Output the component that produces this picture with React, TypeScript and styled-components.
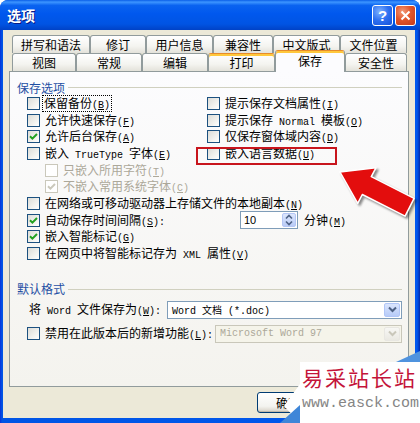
import React from 'react';
import styled, { createGlobalStyle } from 'styled-components';

const CJK = `"Noto Sans CJK SC", "Noto Sans", sans-serif`;
const MONO = `"Liberation Mono", "Noto Sans CJK SC", monospace`;

const GlobalStyle = createGlobalStyle`
  html, body {
    margin: 0;
    padding: 0;
    width: 420px;
    height: 423px;
    overflow: hidden;
    background: #ffffff;
  }
  body {
    font-family: ${CJK};
    font-size: 12px;
  }
`;

const Window = styled.div`
  position: relative;
  width: 420px;
  height: 423px;
  display: flex;
  flex-direction: column;
  background: linear-gradient(to right, #0831d9, #0055e5 2px, #0058ee calc(100% - 3px), #0029a8);
  border-radius: 8px 8px 0 0;
  overflow: hidden;
`;

const TitleBar = styled.div`
  height: 30px;
  flex: none;
  display: flex;
  align-items: center;
  gap: 2px;
  padding: 0 4px 0 7px;
  background: linear-gradient(
    to bottom,
    #0a5fe8 0%,
    #3d95ff 7%,
    #0a63f0 18%,
    #0058ee 45%,
    #0054e3 80%,
    #0042c6 100%
  );
`;

const Title = styled.div`
  flex: 1;
  color: #ffffff;
  font: bold 14px ${CJK};
  line-height: 16px;
  text-shadow: 1px 1px 0 #0a1883;
`;

const CaptionButton = styled.div<{ $close?: boolean }>`
  width: 21px;
  height: 21px;
  box-sizing: border-box;
  border: 1px solid #ffffff;
  border-radius: 3px;
  display: flex;
  align-items: center;
  justify-content: center;
  color: #ffffff;
  font: bold 15px "Liberation Sans", sans-serif;
  background: ${({ $close }) =>
    $close
      ? 'radial-gradient(circle at 35% 30%, #f29b7a 0%, #e2562b 45%, #c4391a 100%)'
      : 'radial-gradient(circle at 35% 30%, #7fb2ff 0%, #2d6ff0 50%, #1550d8 100%)'};
`;

const Body = styled.div`
  flex: 1;
  margin: 0 5px 5px 3px;
  padding-top: 5px;
  background: #ece9d8;
  display: flex;
  flex-direction: column;
`;

const TabRow = styled.div`
  display: flex;
  height: 18px;
  margin-left: 9px;
`;

const Tab = styled.div<{ $w: number; $selected?: boolean; $hot?: boolean }>`
  width: ${({ $w }) => $w}px;
  height: ${({ $selected }) => ($selected ? 22 : 18)}px;
  margin-top: ${({ $selected }) => ($selected ? -3 : 0)}px;
  position: relative;
  z-index: ${({ $selected }) => ($selected ? 2 : 1)};
  box-sizing: border-box;
  border: 1px solid #919b9c;
  border-bottom: none;
  border-top-color: ${({ $selected, $hot }) => ($selected || $hot ? '#e68b2c' : '#919b9c')};
  border-radius: 3px 3px 0 0;
  box-shadow: ${({ $selected, $hot }) => ($selected || $hot ? 'inset 0 2px 0 #ffc83c' : 'none')};
  background: ${({ $selected }) =>
    $selected ? '#fcfcfe' : 'linear-gradient(#ffffff, #f4f4f0 60%, #e3e2da)'};
  display: flex;
  align-items: center;
  justify-content: center;
  padding-bottom: ${({ $selected }) => ($selected ? 2 : 0)}px;
  color: #000000;
  font: 12px ${CJK};
  line-height: 14px;
`;

const Panel = styled.div`
  margin-left: 6px;
  width: 400px;
  height: 316px;
  box-sizing: border-box;
  border: 1px solid #919b9c;
  background: linear-gradient(#fcfcfe, #f4f3ee);
  padding: 8px 6px 0 7px;
`;

const Group = styled.div<{ $gap?: number }>`
  margin-top: ${({ $gap }) => $gap ?? 0}px;
`;

const GroupHead = styled.div`
  display: flex;
  align-items: center;
  height: 15px;
`;

const GroupTitle = styled.span`
  color: #1f4fa3;
  font: 12px ${CJK};
  line-height: 14px;
`;

const GroupRule = styled.div`
  flex: 1;
  height: 1px;
  margin-left: 3px;
  background: #d0d0bf;
`;

const GroupBody = styled.div`
  margin-left: 10px;
`;

const Columns = styled.div`
  display: flex;
`;

const Column = styled.div<{ $w?: number }>`
  width: ${({ $w }) => ($w ? `${$w}px` : 'auto')};
  flex: ${({ $w }) => ($w ? 'none' : 1)};
`;

const Row = styled.div<{ $indent?: number }>`
  display: flex;
  align-items: center;
  height: 16.7px;
  margin-left: ${({ $indent }) => $indent ?? 0}px;
  white-space: nowrap;
`;

const FieldRow = styled.div<{ $gap?: number }>`
  display: flex;
  align-items: center;
  height: 18px;
  margin-top: ${({ $gap }) => $gap ?? 0}px;
  white-space: nowrap;
`;

const Field = styled.div<{ $w: number }>`
  width: ${({ $w }) => $w}px;
  flex: none;
  display: flex;
  align-items: center;
`;

const Box = styled.span<{ $disabled?: boolean }>`
  width: 13px;
  height: 13px;
  flex: none;
  box-sizing: border-box;
  border: 1px solid ${({ $disabled }) => ($disabled ? '#cac8bb' : '#1c5180')};
  background: ${({ $disabled }) =>
    $disabled ? '#ffffff' : 'linear-gradient(135deg, #dcdcd7 0%, #f5f5f2 70%, #ffffff 100%)'};
  display: flex;
  align-items: center;
  justify-content: center;
`;

const Label = styled.span<{ $disabled?: boolean; $focus?: boolean; $gap?: number }>`
  margin-left: ${({ $gap }) => $gap ?? 3}px;
  padding: 0 1px;
  color: ${({ $disabled }) => ($disabled ? '#aca899' : '#000000')};
  font: 12px ${CJK};
  line-height: 14px;
  border: 1px dotted ${({ $focus }) => ($focus ? '#000000' : 'transparent')};
`;

const Latin = styled.span`
  font: 10px ${MONO};
  white-space: pre;
`;

const Key = styled.span`
  font: 10px ${MONO};
  u {
    text-decoration: underline;
  }
`;

const Spin = styled.div`
  width: 58px;
  height: 18px;
  box-sizing: border-box;
  border: 1px solid #7f9db9;
  background: #ffffff;
  display: flex;
  align-items: center;
  justify-content: space-between;
  padding: 1px 1px 1px 3px;
  font: 11px "Liberation Sans", sans-serif;
`;

const SpinButtons = styled.div`
  width: 14px;
  height: 100%;
  border-radius: 2px;
  background: linear-gradient(#dde7fd, #b9cbf7);
  border: 1px solid #b4c6f5;
  box-sizing: border-box;
  display: flex;
  align-items: center;
  justify-content: center;
`;

const Select = styled.div<{ $w: number; $disabled?: boolean }>`
  width: ${({ $w }) => $w}px;
  height: 18px;
  box-sizing: border-box;
  border: 1px solid ${({ $disabled }) => ($disabled ? '#c9c7ba' : '#7f9db9')};
  background: ${({ $disabled }) => ($disabled ? '#f5f4ea' : '#ffffff')};
  color: ${({ $disabled }) => ($disabled ? '#aca899' : '#000000')};
  display: flex;
  align-items: center;
  padding: 1px 1px 1px 4px;
  font: 10px ${MONO};
`;

const SelectText = styled.span`
  flex: 1;
  white-space: pre;
`;

const DropButton = styled.div<{ $disabled?: boolean }>`
  width: 16px;
  height: 100%;
  box-sizing: border-box;
  border-radius: 2px;
  border: 1px solid ${({ $disabled }) => ($disabled ? '#e8e7e2' : '#b1c6f8')};
  background: ${({ $disabled }) =>
    $disabled ? 'linear-gradient(#f7f7f4, #eae9e2)' : 'linear-gradient(#dae5fd, #b7cbf8)'};
  display: flex;
  align-items: center;
  justify-content: center;
`;

const ButtonRow = styled.div`
  display: flex;
  padding: 5px 0 0 254px;
`;

const Button = styled.div`
  width: 62px;
  height: 21px;
  box-sizing: border-box;
  border: 1px solid #003c74;
  border-radius: 3px;
  background: linear-gradient(#ffffff, #f3f3ef 70%, #d6d0c5);
  box-shadow: inset 0 -1px 0 #c0b9ac;
  display: flex;
  align-items: center;
  justify-content: center;
  font: 12px ${CJK};
  line-height: 14px;
`;

const Marker = styled.div`
  position: absolute;
  left: 196px;
  top: 147px;
  width: 141px;
  height: 18px;
  box-sizing: border-box;
  border: 2px solid #c8151d;
`;

const ArrowSvg = styled.svg`
  position: absolute;
  left: 330px;
  top: 158px;
  filter: drop-shadow(2px 2px 1px rgba(0, 0, 0, 0.45));
`;

const Watermark = styled.div`
  position: absolute;
  left: 280px;
  top: 348px;
  width: 140px;
  height: 75px;
`;

const WatermarkShape = styled.svg`
  position: absolute;
  inset: 0;
`;

const WatermarkText = styled.div`
  position: relative;
  margin: 16px 0 0 22px;
  display: flex;
  flex-direction: column;
`;

const BrandName = styled.span`
  color: #c4143a;
  font: 21px ${CJK};
  line-height: 26px;
  letter-spacing: 2px;
`;

const BrandUrl = styled.span`
  color: #858585;
  font: 15px ${MONO};
  line-height: 22px;
  margin-top: 3px;
`;

interface CheckProps {
  label: React.ReactNode;
  checked?: boolean;
  disabled?: boolean;
  focus?: boolean;
}

const Check: React.FC<CheckProps> = ({ label, checked, disabled, focus }) => (
  <>
    <Box $disabled={disabled}>
      {checked && (
        <svg width="9" height="9" viewBox="0 0 9 9">
          <path
            d="M1 4.2 L3.4 6.6 L8 2"
            fill="none"
            stroke={disabled ? '#cac8bb' : '#21a121'}
            strokeWidth="2"
          />
        </svg>
      )}
    </Box>
    <Label $disabled={disabled} $focus={focus} $gap={focus ? 2 : 3}>
      {label}
    </Label>
  </>
);

const K: React.FC<{ k: string; colon?: boolean }> = ({ k, colon }) => (
  <Key>
    (<u>{k}</u>){colon ? ':' : ''}
  </Key>
);

const Chevron: React.FC<{ color: string }> = ({ color }) => (
  <svg width="9" height="7" viewBox="0 0 9 7">
    <path d="M1 1.5 L4.5 5 L8 1.5" fill="none" stroke={color} strokeWidth="2" />
  </svg>
);

const topTabs = [
  { label: '拼写和语法', w: 78 },
  { label: '修订', w: 56 },
  { label: '用户信息', w: 67 },
  { label: '兼容性', w: 60 },
  { label: '中文版式', w: 67 },
  { label: '文件位置', w: 67 },
];

const bottomTabs = [
  { label: '视图', w: 64 },
  { label: '常规', w: 66 },
  { label: '编辑', w: 66 },
  { label: '打印', w: 67, hot: true },
  { label: '保存', w: 70, selected: true },
  { label: '安全性', w: 62 },
];

export default function App() {
  return (
    <>
      <GlobalStyle />
      <Window>
        <TitleBar>
          <Title>选项</Title>
          <CaptionButton>?</CaptionButton>
          <CaptionButton $close>
            <svg width="11" height="11" viewBox="0 0 11 11">
              <path d="M1.5 1.5 L9.5 9.5 M9.5 1.5 L1.5 9.5" stroke="#ffffff" strokeWidth="2" />
            </svg>
          </CaptionButton>
        </TitleBar>

        <Body>
          <TabRow>
            {topTabs.map((t) => (
              <Tab key={t.label} $w={t.w}>
                {t.label}
              </Tab>
            ))}
          </TabRow>
          <TabRow>
            {bottomTabs.map((t) => (
              <Tab key={t.label} $w={t.w} $hot={t.hot} $selected={t.selected}>
                {t.label}
              </Tab>
            ))}
          </TabRow>

          <Panel>
            <Group>
              <GroupHead>
                <GroupTitle>保存选项</GroupTitle>
                <GroupRule />
              </GroupHead>
              <GroupBody>
                <Columns>
                  <Column $w={180}>
                    <Row>
                      <Check focus label={<>保留备份<K k="B" /></>} />
                    </Row>
                    <Row>
                      <Check label={<>允许快速保存<K k="F" /></>} />
                    </Row>
                    <Row>
                      <Check checked label={<>允许后台保存<K k="A" /></>} />
                    </Row>
                    <Row>
                      <Check label={<>嵌入<Latin> TrueType </Latin>字体<K k="E" /></>} />
                    </Row>
                    <Row $indent={18}>
                      <Check disabled label={<>只嵌入所用字符<K k="T" /></>} />
                    </Row>
                    <Row $indent={18}>
                      <Check disabled checked label={<>不嵌入常用系统字体<K k="C" /></>} />
                    </Row>
                  </Column>
                  <Column>
                    <Row>
                      <Check label={<>提示保存文档属性<K k="I" /></>} />
                    </Row>
                    <Row>
                      <Check label={<>提示保存<Latin> Normal </Latin>模板<K k="O" /></>} />
                    </Row>
                    <Row>
                      <Check label={<>仅保存窗体域内容<K k="D" /></>} />
                    </Row>
                    <Row>
                      <Check label={<>嵌入语言数据<K k="U" /></>} />
                    </Row>
                  </Column>
                </Columns>
                <Row>
                  <Check label={<>在网络或可移动驱动器上存储文件的本地副本<K k="N" /></>} />
                </Row>
                <Row>
                  <Field $w={213}>
                    <Check checked label={<>自动保存时间间隔<K k="S" colon /></>} />
                  </Field>
                  <Spin>
                    <span>10</span>
                    <SpinButtons>
                      <svg width="8" height="12" viewBox="0 0 8 12">
                        <path
                          d="M1 4.5 L4 1.5 L7 4.5 M1 7.5 L4 10.5 L7 7.5"
                          fill="none"
                          stroke="#4d6185"
                          strokeWidth="1.6"
                        />
                      </svg>
                    </SpinButtons>
                  </Spin>
                  <Label $gap={4}>
                    分钟<K k="M" />
                  </Label>
                </Row>
                <Row>
                  <Check checked label={<>嵌入智能标记<K k="G" /></>} />
                </Row>
                <Row>
                  <Check label={<>在网页中将智能标记存为<Latin> XML </Latin>属性<K k="V" /></>} />
                </Row>
              </GroupBody>
            </Group>

            <Group $gap={20}>
              <GroupHead>
                <GroupTitle>默认格式</GroupTitle>
                <GroupRule />
              </GroupHead>
              <GroupBody>
                <FieldRow $gap={4}>
                  <Field $w={140}>
                    <Label $gap={0}>
                      将<Latin> Word </Latin>文件保存为<K k="W" colon />
                    </Label>
                  </Field>
                  <Select $w={235}>
                    <SelectText>Word 文档 (*.doc)</SelectText>
                    <DropButton>
                      <Chevron color="#4d6185" />
                    </DropButton>
                  </Select>
                </FieldRow>
                <FieldRow $gap={6}>
                  <Field $w={188}>
                    <Check label={<>禁用在此版本后的新增功能<K k="L" colon /></>} />
                  </Field>
                  <Select $w={187} $disabled>
                    <SelectText>Microsoft Word 97</SelectText>
                    <DropButton $disabled>
                      <Chevron color="#c9c7ba" />
                    </DropButton>
                  </Select>
                </FieldRow>
              </GroupBody>
            </Group>
          </Panel>

          <ButtonRow>
            <Button>确定</Button>
          </ButtonRow>
        </Body>

        <Marker />

        <ArrowSvg width="92" height="66" viewBox="0 0 92 66">
          <polygon
            points="10,14 45.9,9.8 41.3,18.7 84.1,40.4 75.1,58.2 32.3,36.5 27.7,45.4"
            fill="#e30d0d"
            stroke="#ffffff"
            strokeWidth="1.5"
            strokeLinejoin="round"
          />
        </ArrowSvg>

        <Watermark>
          <WatermarkShape width="140" height="75" viewBox="0 0 140 75">
            <polygon points="116,14 140,3 140,14" fill="#4f93de" />
            <polygon points="20,14 140,14 140,75 20,75 4,58 20,36" fill="#ffffff" />
            <polygon points="0,75 20,57 20,75" fill="#3f86d8" />
          </WatermarkShape>
          <WatermarkText>
            <BrandName>易采站长站</BrandName>
            <BrandUrl>www.easck.com</BrandUrl>
          </WatermarkText>
        </Watermark>
      </Window>
    </>
  );
}
